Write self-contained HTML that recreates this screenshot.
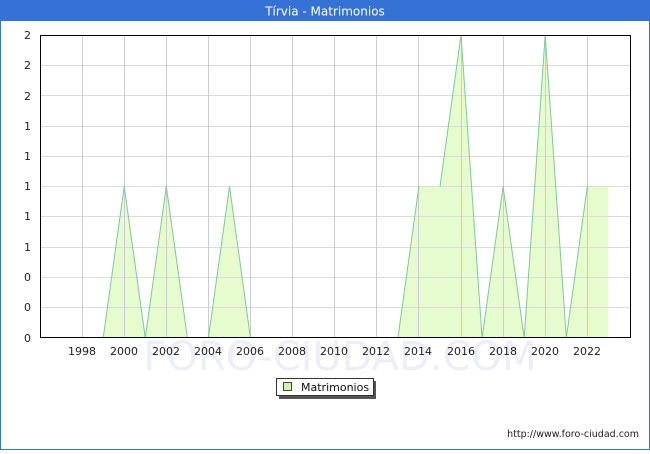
<!DOCTYPE html>
<html><head><meta charset="utf-8"><style>
html,body{margin:0;padding:0;background:#fff}
body{width:650px;height:450px;overflow:hidden;font-family:"DejaVu Sans","Liberation Sans",sans-serif}
</style></head><body>
<svg width="650" height="450" xmlns="http://www.w3.org/2000/svg" font-family="DejaVu Sans, Liberation Sans, sans-serif">
<rect x="0.5" y="0.5" width="649" height="449" fill="#fff" stroke="#3572d6"/>
<rect x="0" y="0" width="650" height="21" fill="#3572d6"/>
<text x="325" y="15.5" fill="#fff" font-size="12" text-anchor="middle">Tírvia - Matrimonios</text>
<text x="340" y="370" fill="#eeeef8" font-size="40" text-anchor="middle">FORO-CIUDAD.COM</text>
<polygon fill="#e6fccf" points="103.2,338 124.2,186.5 145.3,338 166.3,186.5 187.4,338 208.4,338 229.5,186.5 250.5,338 397.9,338 418.9,186.5 440,186.5 461,35 482.1,338 503.1,186.5 524.2,338 545.2,35 566.3,338 587.3,186.5 608.4,186.5 608.4,338"/>
<g stroke="#dcdcdc" stroke-width="1">
<line x1="40" y1="65.5" x2="630" y2="65.5"/><line x1="40" y1="95.5" x2="630" y2="95.5"/><line x1="40" y1="126.5" x2="630" y2="126.5"/><line x1="40" y1="156.5" x2="630" y2="156.5"/><line x1="40" y1="186.5" x2="630" y2="186.5"/><line x1="40" y1="216.5" x2="630" y2="216.5"/><line x1="40" y1="247.5" x2="630" y2="247.5"/><line x1="40" y1="277.5" x2="630" y2="277.5"/><line x1="40" y1="307.5" x2="630" y2="307.5"/>
</g>
<g stroke="#cccccc" stroke-width="1">
<line x1="82.5" y1="35" x2="82.5" y2="338"/><line x1="124.5" y1="35" x2="124.5" y2="338"/><line x1="166.5" y1="35" x2="166.5" y2="338"/><line x1="208.5" y1="35" x2="208.5" y2="338"/><line x1="250.5" y1="35" x2="250.5" y2="338"/><line x1="292.5" y1="35" x2="292.5" y2="338"/><line x1="334.5" y1="35" x2="334.5" y2="338"/><line x1="376.5" y1="35" x2="376.5" y2="338"/><line x1="418.5" y1="35" x2="418.5" y2="338"/><line x1="461.5" y1="35" x2="461.5" y2="338"/><line x1="503.5" y1="35" x2="503.5" y2="338"/><line x1="545.5" y1="35" x2="545.5" y2="338"/><line x1="587.5" y1="35" x2="587.5" y2="338"/>
</g>
<g stroke="#80c89a" stroke-width="1" fill="none">
<polyline points="103.2,338 124.2,186.5 145.3,338 166.3,186.5 187.4,338"/>
<polyline points="208.4,338 229.5,186.5 250.5,338"/>
<polyline points="397.9,338 418.9,186.5"/>
<polyline points="440,186.5 461,35 482.1,338 503.1,186.5 524.2,338 545.2,35 566.3,338 587.3,186.5"/>
</g>
<rect x="40.5" y="35.5" width="590" height="302" fill="none" stroke="#000"/>
<g font-size="11" fill="#222" text-anchor="end">
<text x="31" y="39">2</text><text x="31" y="69">2</text><text x="31" y="100">2</text><text x="31" y="130">1</text><text x="31" y="160">1</text><text x="31" y="190">1</text><text x="31" y="220">1</text><text x="31" y="251">1</text><text x="31" y="281">0</text><text x="31" y="311">0</text><text x="31" y="342">0</text>
</g>
<g font-size="11" fill="#222" text-anchor="middle">
<text x="82" y="355">1998</text><text x="124" y="355">2000</text><text x="166" y="355">2002</text><text x="208" y="355">2004</text><text x="250" y="355">2006</text><text x="292" y="355">2008</text><text x="334" y="355">2010</text><text x="376" y="355">2012</text><text x="418" y="355">2014</text><text x="461" y="355">2016</text><text x="503" y="355">2018</text><text x="545" y="355">2020</text><text x="587" y="355">2022</text>
</g>
<rect x="279" y="381" width="97" height="18" fill="#555"/>
<rect x="276.5" y="378.5" width="97" height="17" fill="#fff" stroke="#333"/>
<rect x="283.5" y="382.5" width="8" height="8" fill="#ccf5a8" stroke="#444"/>
<text x="301" y="391" font-size="11" fill="#111">Matrimonios</text>
<text x="639" y="437" font-size="9.5" fill="#222" text-anchor="end">http://www.foro-ciudad.com</text>
</svg>
</body></html>
